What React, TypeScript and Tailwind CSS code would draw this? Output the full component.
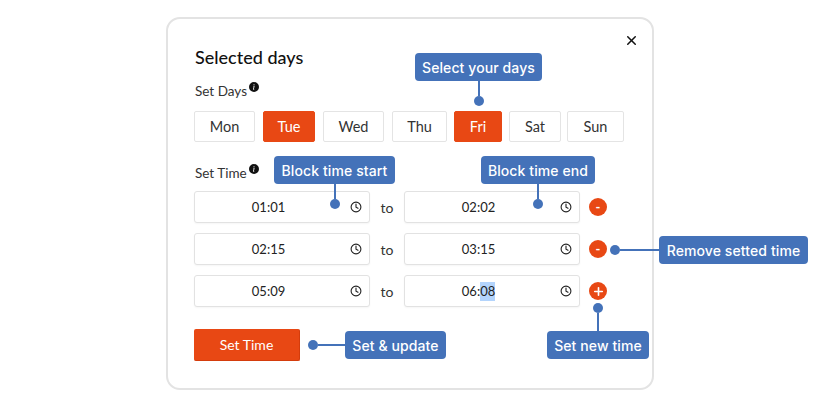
import { Plus, X } from "lucide-react";
import { BsInfoCircleFill } from "react-icons/bs";
import { ReactNode } from "react";

const days = [
  { name: "Mon", width: "w-[61px]" },
  { name: "Tue", width: "w-[52px] ml-[8px]", active: true },
  { name: "Wed", width: "w-[61px] ml-[8px]" },
  { name: "Thu", width: "w-[55px] ml-[8px]" },
  { name: "Fri", width: "w-[48px] ml-[7px]", active: true },
  { name: "Sat", width: "w-[52px] ml-[7px]" },
  { name: "Sun", width: "w-[57px] ml-[6px]" },
];

const rows = [
  { start: "01:01", end: "02:02", sign: "-" },
  { start: "02:15", end: "03:15", sign: "-" },
  { start: "05:09", end: "06:08", sign: "+" },
];

function ClockIcon() {
  return (
    <svg width="12" height="12" viewBox="0 0 12 12" fill="none" stroke="#222" strokeWidth="1.1" strokeLinecap="round" className="shrink-0">
      <circle cx="6" cy="6" r="4.9" />
      <path d="M6 3v3.1l2 1.2" />
    </svg>
  );
}

function TimeInput({ value, selected }: { value: string; selected?: boolean }) {
  const [hh, mm] = value.split(":");
  return (
    <div className="flex items-center w-[176px] h-[32px] bg-white border border-[#e2e2e2] rounded-[3px] shadow-[0_1px_2px_rgba(0,0,0,0.04)] pr-[7px]">
      <div className="flex-1 flex justify-center text-[13px] text-[#222] pr-[8px] pt-px">
        <span>{hh}:</span>
        {selected ? <span className="bg-[#b3d4fc] leading-[19px]">{mm}</span> : <span>{mm}</span>}
      </div>
      <ClockIcon />
    </div>
  );
}

function Label({ children, className }: { children: ReactNode; className: string }) {
  return (
    <div className={`flex items-start text-[#333] text-[13.5px] leading-[18px] ${className}`}>
      {children}
      <BsInfoCircleFill className="text-[10px] text-[#111] ml-[2px] mt-[0px]" />
    </div>
  );
}

function Callout({ children, className }: { children: ReactNode; className: string }) {
  return (
    <div className={`h-[28px] shrink-0 flex items-center justify-center bg-[#4472b9] text-white rounded-[4px] text-[14px] font-medium tracking-[0.1px] whitespace-nowrap font-['Inter',sans-serif] ${className}`}>
      {children}
    </div>
  );
}

function Dot() {
  return <div className="w-[10px] h-[10px] shrink-0 rounded-full bg-[#4472b9]" />;
}

function Annotation({ label, width, className, stem, lineSize }: { label: string; width: string; className: string; stem: "down" | "up" | "left"; lineSize: string }) {
  const direction = stem === "down" ? "flex-col" : stem === "up" ? "flex-col-reverse" : "flex-row";
  return (
    <div className={`absolute flex items-center ${direction} ${className}`}>
      {stem === "left" ? <Dot /> : null}
      {stem === "left" ? <div className={`bg-[#4472b9] h-[2px] ${lineSize}`} /> : null}
      <Callout className={width}>{label}</Callout>
      {stem !== "left" ? <div className={`bg-[#4472b9] w-[2px] ${lineSize}`} /> : null}
      {stem !== "left" ? <Dot /> : null}
    </div>
  );
}

export default function App() {
  return (
    <div className="w-[819px] h-[408px] bg-white pl-[166px] pt-[17px] font-['Lato',sans-serif] overflow-hidden">
      <div className="relative w-[488px] h-[373px] border-2 border-[#e3e3e3] rounded-[14px] bg-white px-[26px] pt-[26px]">
        <X size={15} strokeWidth={2.4} className="absolute right-[13px] top-[14px] text-[#111]" />

        <h2 className="text-[18px] leading-[24px] font-medium text-[#111] pl-px">Selected days</h2>

        <Label className="mt-[13px] pl-px">Set Days</Label>
        <div className="flex mt-[11px]">
          {days.map((d) => (
            <div
              key={d.name}
              className={`${d.width} h-[31px] flex items-center justify-center text-[14.5px] rounded-[2px] border ${
                d.active ? "bg-[#e84814] border-[#e84814] text-white" : "bg-white border-[#e4e4e4] text-[#333]"
              }`}
            >
              {d.name}
            </div>
          ))}
        </div>

        <Label className="mt-[22px] pl-px">Set Time</Label>
        <div className="flex flex-col gap-[10px] mt-[9px]">
          {rows.map((r, i) => (
            <div key={r.start} className="flex items-center">
              <TimeInput value={r.start} />
              <span className="w-[34px] text-center text-[14px] text-[#333]">to</span>
              <TimeInput value={r.end} selected={i === 2} />
              <div className="ml-[9px] w-[18px] h-[18px] rounded-full bg-[#e84814] text-white flex items-center justify-center text-[13px] font-bold leading-none">
                {r.sign === "+" ? <Plus size={13} strokeWidth={3} /> : "-"}
              </div>
            </div>
          ))}
        </div>

        <button className="mt-[22px] w-[106px] h-[32px] bg-[#e84814] border-b border-r border-[#d43c0c] text-white text-[14px] rounded-[2px]">
          Set Time
        </button>

        <Annotation label="Select your days" width="w-[127px]" stem="down" lineSize="h-[15px]" className="left-[247px] top-[34px]" />
        <Annotation label="Block time start" width="w-[121px]" stem="down" lineSize="h-[15px]" className="left-[106px] top-[137px]" />
        <Annotation label="Block time end" width="w-[114px]" stem="down" lineSize="h-[15px]" className="left-[313px] top-[137px]" />
        <Annotation label="Remove setted time" width="w-[149px]" stem="left" lineSize="w-[39px]" className="left-[442px] top-[217px]" />
        <Annotation label="Set new time" width="w-[102px]" stem="up" lineSize="h-[18px]" className="left-[379px] top-[284px]" />
        <Annotation label="Set & update" width="w-[101px]" stem="left" lineSize="w-[27px]" className="left-[140px] top-[312px]" />
      </div>
    </div>
  );
}
